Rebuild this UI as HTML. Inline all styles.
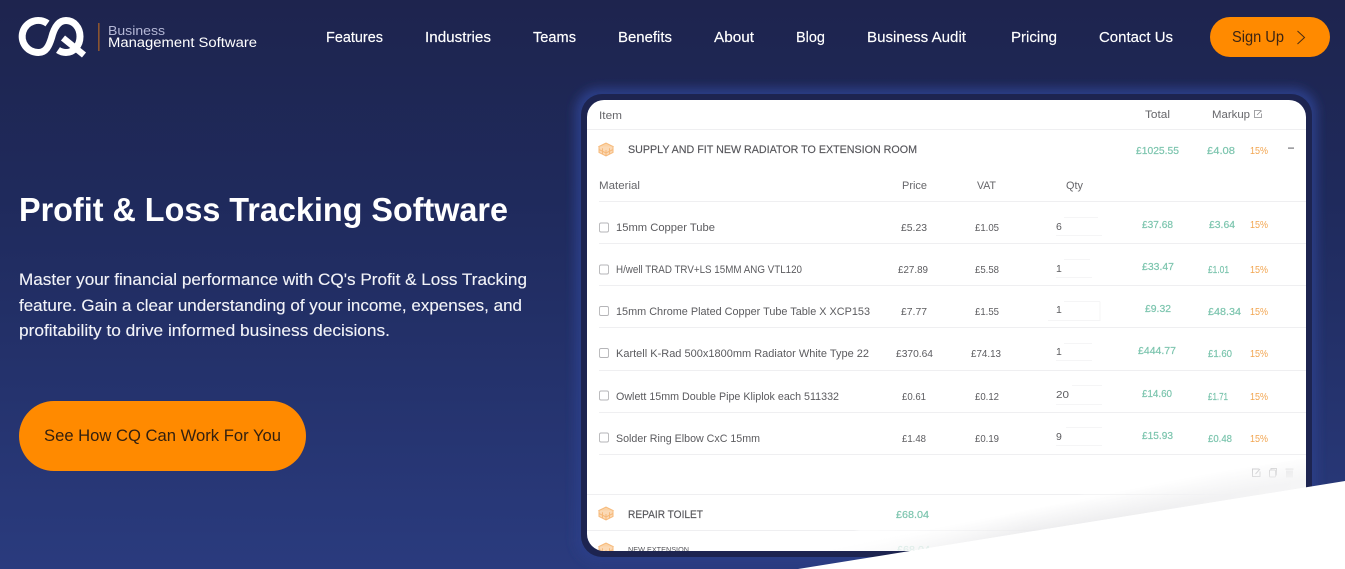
<!DOCTYPE html>
<html lang="en">
<head>
<meta charset="utf-8">
<title>Profit &amp; Loss Tracking Software</title>
<style>
html,body{margin:0;padding:0;width:1345px;height:569px;overflow:hidden;background:#1e2550}
svg{display:block}
text{font-family:"Liberation Sans",sans-serif;white-space:pre}
.nav{font-size:14.5px;fill:#fff;stroke:#fff;stroke-width:.15}
.t{font-size:10.8px;fill:#5b5b5f}
.n{font-size:10.5px;fill:#5b5b5f}
.h{font-size:11px;fill:#66666a}
.b{font-size:10.8px;fill:#55555a;stroke:#55555a;stroke-width:.15}
.g{font-size:10.5px;fill:#7cc5ae;stroke:#7cc5ae;stroke-width:.2}
.o{font-size:10.5px;fill:#f2a550}
.ln{stroke:#efeff1;stroke-width:1}
.cb{fill:#fff;stroke:#b5b5b8;stroke-width:.9}
</style>
</head>
<body>
<svg width="1345" height="569" viewBox="0 0 1345 569" xmlns="http://www.w3.org/2000/svg">
<defs>
<linearGradient id="bg" x1="0" y1="0" x2="0" y2="1">
<stop offset="0" stop-color="#1e244e"/><stop offset=".35" stop-color="#1f2a5c"/><stop offset="1" stop-color="#2a3b7e"/>
</linearGradient>
<linearGradient id="sh" gradientUnits="userSpaceOnUse" x1="1095" y1="496" x2="1100" y2="521">
<stop offset="0" stop-color="#e6e6e8" stop-opacity="0"/><stop offset="1" stop-color="#e6e6e8"/>
</linearGradient>
<linearGradient id="fade" gradientUnits="userSpaceOnUse" x1="800" y1="0" x2="1300" y2="0">
<stop offset="0" stop-color="#fff" stop-opacity=".9"/><stop offset=".45" stop-color="#fff" stop-opacity=".2"/><stop offset="1" stop-color="#fff" stop-opacity=".6"/>
</linearGradient>
<filter id="gl" x="-10%" y="-10%" width="120%" height="120%"><feGaussianBlur stdDeviation="5"/></filter>
<filter id="soft" x="-2%" y="-2%" width="104%" height="104%"><feGaussianBlur stdDeviation=".28"/></filter>
<clipPath id="cc"><rect x="587" y="100" width="719" height="451" rx="17"/></clipPath>
<g id="box" fill="none" stroke="#f6b97a" stroke-width="1">
<path d="M0 3.5L7 0l7 3.5L7 7z" fill="#fbd3a6"/>
<path d="M0 3.5V9.5L7 13l7-3.5V3.5" fill="#fbd9b5"/>
<path d="M0 6.5L7 10l7-3.5M7 7v6M3.5 5.2v6M10.5 5.2v6"/>
</g>
</defs>

<rect width="1345" height="569" fill="url(#bg)"/>

<!-- logo -->
<g fill="none" stroke="#fff" stroke-width="7" stroke-linecap="butt">
<path d="M47.500 23.500A16 16 0 1 0 38.500 52.500C46 52.500 49 46 51.500 38C54 28 58 20.500 66 20.500C74 20.500 80 27.500 80 36.500C80 45.500 74 52.500 66 52.500C63 52.500 60.500 51.700 58 50"/>
<path d="M63 38L84 55" stroke-width="6.500"/>
</g>
<rect x="98" y="23" width="1.600" height="28" fill="#8a5430"/>
<text x="108" y="35" font-size="13" fill="#b5b8d6" textLength="57" lengthAdjust="spacingAndGlyphs">Business</text>
<text x="108" y="47" font-size="13.500" fill="#fff" textLength="149" lengthAdjust="spacingAndGlyphs">Management Software</text>

<!-- nav -->
<text class="nav" x="326" y="42" textLength="57" lengthAdjust="spacingAndGlyphs">Features</text>
<text class="nav" x="425" y="42" textLength="66" lengthAdjust="spacingAndGlyphs">Industries</text>
<text class="nav" x="533" y="42" textLength="43" lengthAdjust="spacingAndGlyphs">Teams</text>
<text class="nav" x="618" y="42" textLength="54" lengthAdjust="spacingAndGlyphs">Benefits</text>
<text class="nav" x="714" y="42" textLength="40" lengthAdjust="spacingAndGlyphs">About</text>
<text class="nav" x="796" y="42" textLength="29" lengthAdjust="spacingAndGlyphs">Blog</text>
<text class="nav" x="867" y="42" textLength="99" lengthAdjust="spacingAndGlyphs">Business Audit</text>
<text class="nav" x="1011" y="42" textLength="46" lengthAdjust="spacingAndGlyphs">Pricing</text>
<text class="nav" x="1099" y="42" textLength="74" lengthAdjust="spacingAndGlyphs">Contact Us</text>

<rect x="1210" y="17" width="120" height="40" rx="20" fill="#ff8a00"/>
<text x="1232" y="42" font-size="15.500" fill="#3c2413" textLength="52" lengthAdjust="spacingAndGlyphs">Sign Up</text>
<path d="M1297.500 31L1304.500 37.500L1297.500 44" fill="none" stroke="#4a2c12" stroke-width="1"/>

<!-- hero -->
<text x="19" y="221" font-size="33" font-weight="700" fill="#fff" textLength="489" lengthAdjust="spacingAndGlyphs">Profit &amp; Loss Tracking Software</text>
<g font-size="16.500" fill="#f2f3f8" stroke="#f2f3f8" stroke-width=".12">
<text x="19" y="285" textLength="508" lengthAdjust="spacingAndGlyphs">Master your financial performance with CQ's Profit &amp; Loss Tracking</text>
<text x="19" y="311" textLength="503" lengthAdjust="spacingAndGlyphs">feature. Gain a clear understanding of your income, expenses, and</text>
<text x="19" y="336" textLength="371" lengthAdjust="spacingAndGlyphs">profitability to drive informed business decisions.</text>
</g>
<rect x="19" y="401" width="287" height="70" rx="35" fill="#ff8a00"/>
<text x="44" y="441" font-size="17" fill="#33200f" textLength="237" lengthAdjust="spacingAndGlyphs">See How CQ Can Work For You</text>

<!-- card frame -->
<rect x="575" y="88" width="742" height="475" rx="24" fill="#2b3e86" filter="url(#gl)"/>
<rect x="581" y="94" width="731" height="463" rx="21" fill="#1d2450"/>
<rect x="587" y="100" width="719" height="451" rx="17" fill="#fff"/>

<g clip-path="url(#cc)">
<g filter="url(#soft)">
<!-- header -->
<text class="h" x="599" y="119" textLength="23" lengthAdjust="spacingAndGlyphs">Item</text>
<text class="h" x="1145" y="118" textLength="25" lengthAdjust="spacingAndGlyphs">Total</text>
<text class="h" x="1212" y="118" textLength="38" lengthAdjust="spacingAndGlyphs">Markup</text>
<g fill="none" stroke="#8b8b8f" stroke-width=".8"><path d="M1261 112v-1.500h-6.500v7h7v-4"/><path d="M1257 115l4-4"/></g>
<line class="ln" x1="587" y1="129.500" x2="1306" y2="129.500"/>

<use href="#box" x="599" y="143"/>
<text class="b" x="628" y="153" textLength="289" lengthAdjust="spacingAndGlyphs">SUPPLY AND FIT NEW RADIATOR TO EXTENSION ROOM</text>
<text class="g" x="1136" y="154" textLength="43" lengthAdjust="spacingAndGlyphs">£1025.55</text>
<text class="g" x="1207" y="154" textLength="28" lengthAdjust="spacingAndGlyphs">£4.08</text>
<text class="o" x="1250" y="154" textLength="18" lengthAdjust="spacingAndGlyphs">15%</text>
<rect x="1288" y="147.500" width="6" height="1.200" fill="#77777b"/>

<text class="h" x="599" y="189" textLength="41" lengthAdjust="spacingAndGlyphs">Material</text>
<text class="h" x="902" y="189" textLength="25" lengthAdjust="spacingAndGlyphs">Price</text>
<text class="h" x="977" y="189" textLength="19" lengthAdjust="spacingAndGlyphs">VAT</text>
<text class="h" x="1066" y="189" textLength="17" lengthAdjust="spacingAndGlyphs">Qty</text>

<line class="ln" x1="599" y1="201.500" x2="1306" y2="201.500"/>
<line class="ln" x1="599" y1="243.500" x2="1306" y2="243.500"/>
<line class="ln" x1="599" y1="285.500" x2="1306" y2="285.500"/>
<line class="ln" x1="599" y1="327.500" x2="1306" y2="327.500"/>
<line class="ln" x1="599" y1="370.500" x2="1306" y2="370.500"/>
<line class="ln" x1="599" y1="412.500" x2="1306" y2="412.500"/>
<line class="ln" x1="599" y1="454.500" x2="1306" y2="454.500"/>

<!-- row 1 -->
<rect class="cb" x="599.500" y="223" width="9" height="9" rx="1.500"/>
<text class="t" x="616" y="231" textLength="99" lengthAdjust="spacingAndGlyphs">15mm Copper Tube</text>
<text class="n" x="901" y="231" textLength="26" lengthAdjust="spacingAndGlyphs">£5.23</text>
<text class="n" x="975" y="231" textLength="24" lengthAdjust="spacingAndGlyphs">£1.05</text>
<text class="n" x="1056" y="230">6</text>
<text class="g" x="1142" y="228" textLength="31" lengthAdjust="spacingAndGlyphs">£37.68</text>
<text class="g" x="1209" y="228" textLength="26" lengthAdjust="spacingAndGlyphs">£3.64</text>
<text class="o" x="1250" y="228" textLength="18" lengthAdjust="spacingAndGlyphs">15%</text>
<!-- row 2 -->
<rect class="cb" x="599.500" y="265" width="9" height="9" rx="1.500"/>
<text class="t" x="616" y="273" textLength="186" lengthAdjust="spacingAndGlyphs">H/well TRAD TRV+LS 15MM ANG VTL120</text>
<text class="n" x="898" y="273" textLength="30" lengthAdjust="spacingAndGlyphs">£27.89</text>
<text class="n" x="975" y="273" textLength="24" lengthAdjust="spacingAndGlyphs">£5.58</text>
<text class="n" x="1056" y="272">1</text>
<text class="g" x="1142" y="270" textLength="32" lengthAdjust="spacingAndGlyphs">£33.47</text>
<text class="g" x="1208" y="273" textLength="21" lengthAdjust="spacingAndGlyphs">£1.01</text>
<text class="o" x="1250" y="273" textLength="18" lengthAdjust="spacingAndGlyphs">15%</text>
<!-- row 3 -->
<rect class="cb" x="599.500" y="306.500" width="9" height="9" rx="1.500"/>
<text class="t" x="616" y="315" textLength="254" lengthAdjust="spacingAndGlyphs">15mm Chrome Plated Copper Tube Table X XCP153</text>
<text class="n" x="901" y="315" textLength="26" lengthAdjust="spacingAndGlyphs">£7.77</text>
<text class="n" x="975" y="315" textLength="24" lengthAdjust="spacingAndGlyphs">£1.55</text>
<text class="n" x="1056" y="313">1</text>
<text class="g" x="1145" y="312" textLength="26" lengthAdjust="spacingAndGlyphs">£9.32</text>
<text class="g" x="1208" y="315" textLength="33" lengthAdjust="spacingAndGlyphs">£48.34</text>
<text class="o" x="1250" y="315" textLength="18" lengthAdjust="spacingAndGlyphs">15%</text>
<!-- row 4 -->
<rect class="cb" x="599.500" y="348.500" width="9" height="9" rx="1.500"/>
<text class="t" x="616" y="357" textLength="253" lengthAdjust="spacingAndGlyphs">Kartell K-Rad 500x1800mm Radiator White Type 22</text>
<text class="n" x="896" y="357" textLength="37" lengthAdjust="spacingAndGlyphs">£370.64</text>
<text class="n" x="971" y="357" textLength="30" lengthAdjust="spacingAndGlyphs">£74.13</text>
<text class="n" x="1056" y="355">1</text>
<text class="g" x="1138" y="354" textLength="38" lengthAdjust="spacingAndGlyphs">£444.77</text>
<text class="g" x="1208" y="357" textLength="24" lengthAdjust="spacingAndGlyphs">£1.60</text>
<text class="o" x="1250" y="357" textLength="18" lengthAdjust="spacingAndGlyphs">15%</text>
<!-- row 5 -->
<rect class="cb" x="599.500" y="391" width="9" height="9" rx="1.500"/>
<text class="t" x="616" y="400" textLength="223" lengthAdjust="spacingAndGlyphs">Owlett 15mm Double Pipe Kliplok each 511332</text>
<text class="n" x="902" y="400" textLength="24" lengthAdjust="spacingAndGlyphs">£0.61</text>
<text class="n" x="975" y="400" textLength="24" lengthAdjust="spacingAndGlyphs">£0.12</text>
<text class="n" x="1056" y="398" textLength="13" lengthAdjust="spacingAndGlyphs">20</text>
<text class="g" x="1142" y="397" textLength="30" lengthAdjust="spacingAndGlyphs">£14.60</text>
<text class="g" x="1208" y="400" textLength="20" lengthAdjust="spacingAndGlyphs">£1.71</text>
<text class="o" x="1250" y="400" textLength="18" lengthAdjust="spacingAndGlyphs">15%</text>
<!-- row 6 -->
<rect class="cb" x="599.500" y="433" width="9" height="9" rx="1.500"/>
<text class="t" x="616" y="442" textLength="144" lengthAdjust="spacingAndGlyphs">Solder Ring Elbow CxC 15mm</text>
<text class="n" x="902" y="442" textLength="24" lengthAdjust="spacingAndGlyphs">£1.48</text>
<text class="n" x="975" y="442" textLength="24" lengthAdjust="spacingAndGlyphs">£0.19</text>
<text class="n" x="1056" y="440">9</text>
<text class="g" x="1142" y="439" textLength="31" lengthAdjust="spacingAndGlyphs">£15.93</text>
<text class="g" x="1208" y="442" textLength="24" lengthAdjust="spacingAndGlyphs">£0.48</text>
<text class="o" x="1250" y="442" textLength="18" lengthAdjust="spacingAndGlyphs">15%</text>

<!-- qty boxes -->
<g fill="none" stroke="#f5f5f6" stroke-width=".9">
<path d="M1064 217.500h34M1056 235.500h46"/>
<path d="M1064 259.500h26M1056 277.500h36"/>
<path d="M1064 301.500h36M1048 320.500h52v-19"/>
<path d="M1064 343.500h28M1056 360.500h36"/>
<path d="M1072 385.500h30M1056 404.500h46"/>
<path d="M1066 427.500h36M1056 445.500h46"/>
</g>

<!-- action icons -->
<g fill="none" stroke="#8a8a8e" stroke-width="1">
<path d="M1259 469h-6.500v7.500h7.500v-5"/><path d="M1255.500 474l4.500-5"/>
<rect x="1269.500" y="470" width="6" height="7" rx="1"/><path d="M1271 470v-1.500h5.500v6.500h-1"/>
</g>
<path d="M1286 470.500h7v7h-7z" fill="#bdbdc0"/><rect x="1285.500" y="468.500" width="8" height="1.200" fill="#aaa"/>

<line class="ln" x1="587" y1="494.500" x2="1306" y2="494.500"/>
<use href="#box" x="599" y="507"/>
<text class="b" x="628" y="518" textLength="75" lengthAdjust="spacingAndGlyphs">REPAIR TOILET</text>
<text class="g" x="896" y="518" textLength="33" lengthAdjust="spacingAndGlyphs">£68.04</text>
<line class="ln" x1="587" y1="530.500" x2="1306" y2="530.500"/>
<use href="#box" x="599" y="543"/>
<text x="628" y="552" font-size="7.500" fill="#55555a" textLength="61" lengthAdjust="spacingAndGlyphs">NEW EXTENSION</text>
<text class="g" x="897" y="553" textLength="33" lengthAdjust="spacingAndGlyphs">£68.04</text>
</g>
<!-- page curl shadow -->
<polygon points="798,540 1345,452 1345,481 798,569" fill="url(#sh)"/>
<polygon points="798,540 1345,452 1345,481 798,569" fill="url(#fade)"/>
</g>

<!-- white wedge -->
<polygon points="798,569 1345,481 1345,569" fill="#fff"/>
</svg>
</body>
</html>
